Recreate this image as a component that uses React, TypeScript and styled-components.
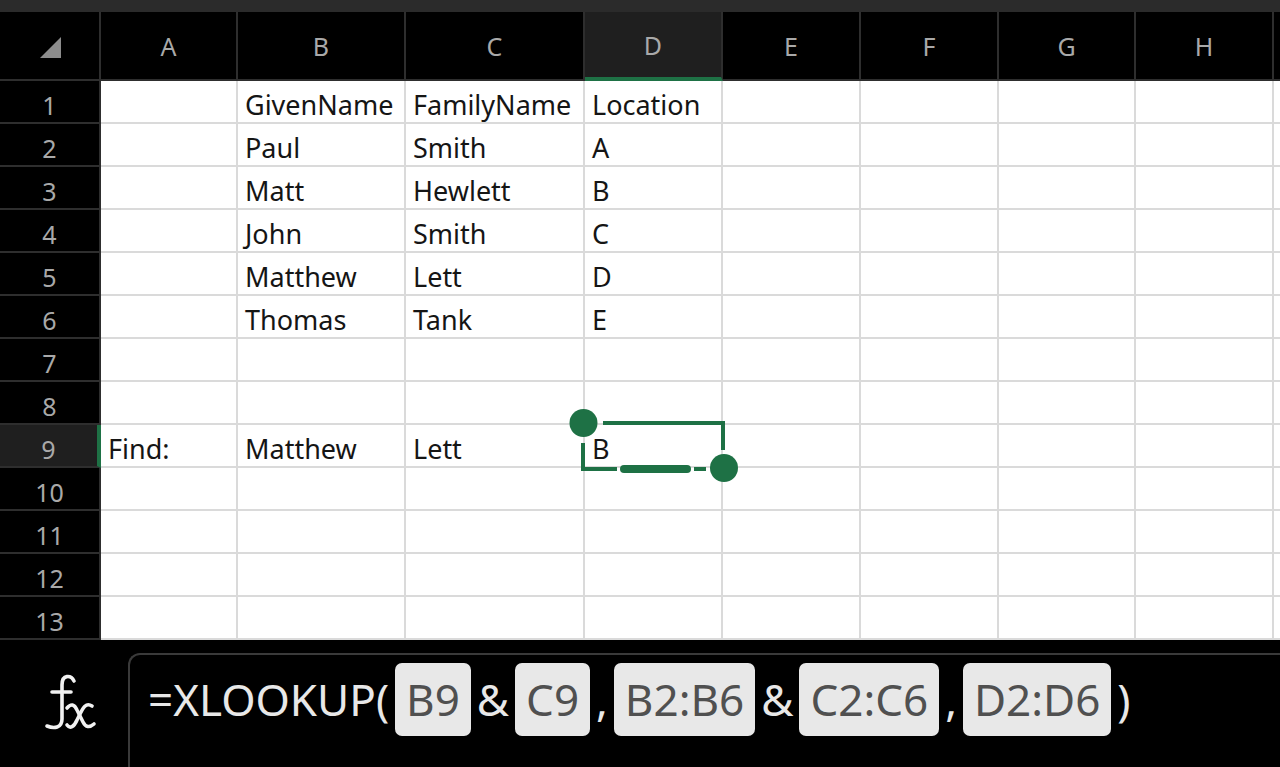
import React from 'react';
import styled, { createGlobalStyle, css } from 'styled-components';

const GREEN = '#1e7145';
const HEAD_LINE = '#2e2e2e';
const GRID_LINE = '#dadada';

const GlobalStyle = createGlobalStyle`
  html, body {
    margin: 0;
    padding: 0;
    background: #000;
  }
  body {
    font-family: 'Noto Sans', 'Open Sans', sans-serif;
  }
`;

const Screen = styled.div`
  width: 1280px;
  height: 767px;
  overflow: hidden;
  background: #000;
  display: flex;
  flex-direction: column;
`;

const TopStrip = styled.div`
  flex: none;
  height: 12px;
  background: #2b2b2b;
`;

const Sheet = styled.div`
  flex: none;
  display: grid;
  grid-template-columns: 101px 137px 168px 179px 138px 138px 138px 137px 138px 1fr;
  grid-template-rows: 69px repeat(13, 43px);
`;

const Corner = styled.div`
  display: flex;
  justify-content: flex-end;
  align-items: flex-end;
  padding: 0 38px 21px 0;
  border-right: 2px solid ${HEAD_LINE};
  border-bottom: 2px solid ${HEAD_LINE};
`;

const CornerMark = styled.div`
  width: 21px;
  height: 21px;
  background: #8c8c8c;
  clip-path: polygon(100% 0, 100% 100%, 0 100%);
`;

const ColHeader = styled.div<{ $active?: boolean }>`
  display: flex;
  align-items: center;
  justify-content: center;
  font-size: 25px;
  color: #a9a9a9;
  background: #000;
  border-right: 2px solid ${HEAD_LINE};
  border-bottom: 2px solid ${HEAD_LINE};
  ${(p) =>
    p.$active &&
    css`
      background: #1f1f1f;
      border-bottom: 4px solid ${GREEN};
    `}
`;

const RowHeader = styled.div<{ $active?: boolean }>`
  display: flex;
  align-items: center;
  justify-content: center;
  padding-top: 6px;
  font-size: 25px;
  color: #a9a9a9;
  background: #000;
  border-right: 2px solid ${HEAD_LINE};
  border-bottom: 2px solid ${HEAD_LINE};
  ${(p) =>
    p.$active &&
    css`
      background: #1f1f1f;
      border-right: 4px solid ${GREEN};
    `}
`;

const Cell = styled.div<{ $selected?: boolean }>`
  position: relative;
  z-index: ${(p) => (p.$selected ? 2 : 'auto')};
  display: flex;
  align-items: center;
  padding: 6px 0 0 7px;
  font-size: 27px;
  color: #151515;
  background: #fff;
  border-right: 2px solid ${GRID_LINE};
  border-bottom: 2px solid ${GRID_LINE};
  white-space: nowrap;
`;

const Handles = styled.svg`
  position: absolute;
  left: -20px;
  top: -20px;
  overflow: visible;
  pointer-events: none;
`;

const FormulaBar = styled.div`
  flex: 1;
  display: flex;
  padding-top: 13px;
`;

const FxSlot = styled.div`
  flex: none;
  width: 128px;
  padding: 19px 0 0 40px;
  box-sizing: border-box;
`;

const FormulaBox = styled.div`
  flex: 1;
  display: flex;
  align-items: flex-start;
  gap: 6px;
  padding: 8px 0 0 18px;
  border-top: 2px solid #3a3a3a;
  border-left: 2px solid #3a3a3a;
  border-top-left-radius: 12px;
  font-size: 44px;
`;

const Plain = styled.span`
  height: 73px;
  line-height: 73px;
  color: #e8e8e8;
`;

const Ref = styled.span`
  height: 73px;
  line-height: 73px;
  padding: 0 11px;
  border-radius: 7px;
  background: #e8e8e8;
  color: #505050;
`;

const columns = ['A', 'B', 'C', 'D', 'E', 'F', 'G', 'H', ''];

const rows: string[][] = [
  ['', 'GivenName', 'FamilyName', 'Location'],
  ['', 'Paul', 'Smith', 'A'],
  ['', 'Matt', 'Hewlett', 'B'],
  ['', 'John', 'Smith', 'C'],
  ['', 'Matthew', 'Lett', 'D'],
  ['', 'Thomas', 'Tank', 'E'],
  [],
  [],
  ['Find:', 'Matthew', 'Lett', 'B'],
  [],
  [],
  [],
  [],
];

const ACTIVE_ROW = 8;
const ACTIVE_COL = 3;

// selection frame with drag handles, drawn in page coordinates
const SelectionHandles = () => (
  <Handles width={180} height={85} viewBox="565 405 180 85">
    <g stroke={GREEN} fill="none" strokeWidth={4}>
      <path d="M603 423 H723 V450" />
      <path d="M583 443 V469 H617" />
      <path d="M694 469 H706" />
      <path d="M624 469 H687" strokeWidth={8} strokeLinecap="round" />
    </g>
    <circle cx={583.5} cy={423} r={14} fill={GREEN} />
    <circle cx={724} cy={468} r={14} fill={GREEN} />
  </Handles>
);

const FxIcon = () => (
  <svg width={60} height={60} viewBox="0 0 60 60">
    <g stroke="#f2f2f2" strokeWidth={3.6} fill="none" strokeLinecap="round" strokeLinejoin="round">
      <path d="M34 9 C31 3 22 2 22 13 L22 47 C22 56 14 57 7 54" />
      <path d="M12 20 H31" />
      <path d="M27 36 Q33 29 37 38 L43 50 Q47 58 54 52" />
      <path d="M52 34 C46 30 43 36 40 42 L37 48 C34 55 30 57 27 53" />
    </g>
  </svg>
);

export default function App() {
  return (
    <Screen>
      <GlobalStyle />
      <TopStrip />
      <Sheet>
        <Corner>
          <CornerMark />
        </Corner>
        {columns.map((c, i) => (
          <ColHeader key={`col_${i}`} $active={i === ACTIVE_COL}>
            {c}
          </ColHeader>
        ))}
        {rows.map((row, r) => {
          const selectedRow = r === ACTIVE_ROW;
          return (
            <React.Fragment key={`row_${r}`}>
              <RowHeader $active={selectedRow}>{r + 1}</RowHeader>
              {columns.map((_, c) => {
                const selected = selectedRow && c === ACTIVE_COL;
                return (
                  <Cell key={`cell_${r}_${c}`} $selected={selected}>
                    {row[c] || ''}
                    {selected && <SelectionHandles />}
                  </Cell>
                );
              })}
            </React.Fragment>
          );
        })}
      </Sheet>
      <FormulaBar>
        <FxSlot>
          <FxIcon />
        </FxSlot>
        <FormulaBox>
          <Plain>=XLOOKUP(</Plain>
          <Ref>B9</Ref>
          <Plain>&amp;</Plain>
          <Ref>C9</Ref>
          <Plain>,</Plain>
          <Ref>B2:B6</Ref>
          <Plain>&amp;</Plain>
          <Ref>C2:C6</Ref>
          <Plain>,</Plain>
          <Ref>D2:D6</Ref>
          <Plain>)</Plain>
        </FormulaBox>
      </FormulaBar>
    </Screen>
  );
}
